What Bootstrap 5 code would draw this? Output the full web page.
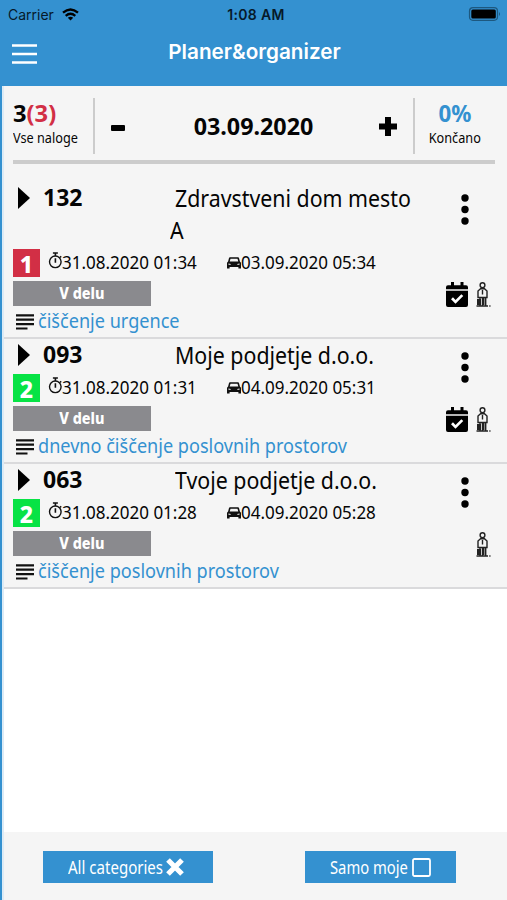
<!DOCTYPE html>
<html lang="sl">
<head>
<meta charset="utf-8">
<meta name="viewport" content="width=device-width, initial-scale=1">
<title>Planer&amp;organizer</title>
<link href="https://cdn.jsdelivr.net/npm/bootstrap@5.3.0/dist/css/bootstrap.min.css" rel="stylesheet">
<style>
:root{--brand:#3491d0;--panel:#f5f5f5}
body{font-family:"Noto Sans","Open Sans",sans-serif;color:#050505;background:#fff;overflow:hidden}
.app{height:900px}
.topbar{height:86px;background:var(--brand);font-family:Inter,"Liberation Sans",sans-serif}
.status{height:27px;font-size:14px;color:#06192a;display:grid;grid-template-columns:1fr auto 1fr;padding:1px 6px 0 8px}
.status b{font-weight:600;font-size:14px;padding-left:3px;letter-spacing:.3px}
.titlebar{height:50px;display:grid;grid-template-columns:1fr auto 1fr;padding:3px 12px 0;color:#fff}
.titlebar h1{font-size:20.7px;font-weight:600;margin:0 0 3px 2px}
.main-area{border-left:2px solid var(--brand);box-shadow:inset 2px 0 0 #dcebf6}
.tight{display:inline-block;white-space:nowrap;transform-origin:0 50%}
.mid{transform-origin:50% 50%}
.panel{background:var(--panel);margin-left:2px}
.summary{height:74px;margin:0 12px 0 9px;padding-top:12px}
.summary .cell{height:56px}
.side{width:80px}
.rule-y{width:2px;height:56px;background:#ccc}
.rule-x{height:4px;background:#ccc;margin:0 12px 0 9px}
.big{font-size:23px;font-weight:700;line-height:30px}
.alert-ink{color:#d22f45}
.brand-ink{color:var(--brand)}
.cap{font-size:14.5px;line-height:18px}
.task{height:125px;border-bottom:2px solid #dadadc;padding-left:9px;display:grid;grid-template-columns:minmax(0,1fr) 78px}
.task.tall{height:175px}
.line1{height:35px}
.tall .line1{height:85px;padding-top:18px}
.play{width:0;height:0;flex:none;border-left:12px solid #000;border-top:11px solid transparent;border-bottom:11px solid transparent;margin:5px 0 0 5px}
.num{width:132px;flex:none;margin-left:13px;font-size:23px;font-weight:700;line-height:30px}
.who{font-size:23.5px;line-height:32px}
.who .wrapped{margin-left:-5px}
.line2{height:28px}
.prio{width:27px;height:28px;color:#fff;font-weight:800;font-size:23px;line-height:31px;text-align:center;background:#07e345}
.prio.high{background:#d22f45}
.when{font-size:18px;line-height:26px;height:26px}
.when.start{width:179px;margin-left:8px}
.when svg.clock{margin:3px -1px 0 0}
.state{width:138px;height:25px;margin-top:4px;background:#8a8a8e;color:#fff;font-weight:800;font-size:16.500px;line-height:23px;text-align:center}
.desc{height:29px;color:var(--brand);font-size:19.5px;line-height:29px;padding-left:3px}
.desc svg{margin:3px 4px 0 0}
.dots{width:8px;height:31px;margin:13px 0 0 32px}
.tall .dots{margin-top:30px}
.marks{height:27px;margin:24px 16px 0 0;gap:8px}
.tall .marks{margin-top:57px}
.footer-bar{height:68px;margin-top:auto;background:var(--panel);margin-left:2px;padding-top:1px}
.act,.act:hover{background:var(--brand);color:#fff;border:0}
.act{font-size:17.5px;border-radius:0;height:32px;padding:0;line-height:32px;gap:5px}
.act svg{margin-top:1px}
.act.all{width:170px;margin-left:39px}
.act.mine{width:151px;margin-right:51px}
.s-big{transform:scaleX(1.03)}
.s-cap{transform:scaleX(.875)}
.s-date{font-size:23.3px;font-weight:700;padding-left:3px}
.s-pct{transform:scaleX(.97)}
.s-who{transform:scaleX(.908)}
.s-when{transform:scaleX(.945)}
.s-desc{transform:scaleX(.928)}
.s-state{transform:scaleX(.87)}
.s-btn{transform:scaleX(.86);margin-right:-17px}
.all .s-btn{margin-left:-4px}
.mine .s-btn{transform:scaleX(.845);margin-right:-16px}
</style>
<script src="https://cdn.jsdelivr.net/npm/bootstrap@5.3.0/dist/js/bootstrap.bundle.min.js"></script>
</head>
<body>
<svg width="0" height="0" class="d-none">
<symbol id="watch" viewBox="0 0 15 17"><circle cx="7.3" cy="9.800" r="5.800" fill="none" stroke="#111" stroke-width="1.4"/><path d="M4.900 1h5M7.400 1v3M12 4.300l1.200 1M7.400 6.300v4.400" fill="none" stroke="#111" stroke-width="1.600"/></symbol>
<symbol id="auto" viewBox="0 0 14 12"><path fill="#111" fill-rule="evenodd" d="M3 .3h8q.8 0 1 .8l.9 3.400 1.100 1.200v5.800h-2.600V10H2.600v1.500H0V5.700l1.100-1.200L2 1.100Q2.200.3 3 .3zM3.500 1.800l-.8 2.700h8.600l-.8-2.700zM1.500 6.500v1.300h2.200v-.9zM12.500 6.500l-2.200.4v.9h2.200z"/></symbol>
<symbol id="lines" viewBox="0 0 18 16"><path d="M0 1.300h18M0 5.700h18M0 10.100h18M0 14.500h11.500" stroke="#111" stroke-width="2.200"/></symbol>
<symbol id="kebab" viewBox="0 0 8 31"><circle cx="4" cy="4" r="3.700"/><circle cx="4" cy="15.500" r="3.700"/><circle cx="4" cy="27" r="3.700"/></symbol>
<symbol id="cal" viewBox="0 0 22 25"><path d="M5 0h3v3.300h6.500V0h3v3.300H20q2 0 2 2v2H0v-2q0-2 2-2h3zM0 8.800h22V23q0 2-2 2H2q-2 0-2-2z"/><path d="M6 16.300l3.500 3.600 6.800-6.800" fill="none" stroke="#fff" stroke-width="2.700"/></symbol>
<symbol id="person" viewBox="0 0 15 25"><g fill="none" stroke="#222" stroke-width="1.400"><circle cx="6.500" cy="3.200" r="2.400"/><path d="M4.500 6.700L2 9v6.500h9V9L8.500 6.700zM6.500 8v4.500M4 15.500v8M6.500 15.500v8M9.700 15.500v8M.5 24h11.500M13.300 24h1.200"/></g><path d="M1 17h4v6H1zM7 16h1.500v7H7z" fill="#222"/></symbol>
</svg>
<div class="app d-flex flex-column">
<header class="topbar">
 <div class="status align-items-center">
  <div class="d-flex align-items-center gap-2"><span>Carrier</span>
   <svg width="17" height="13" viewBox="0 0 17 13"><g fill="none" stroke="#000" stroke-width="2.300"><path d="M1 4.700q7.500-6.400 15 0M3.700 7.800q4.800-4 9.600 0"/></g><path d="M5.800 9.700q2.700-2 5.400 0L8.500 12.600z"/></svg></div>
  <b>1:08 AM</b>
  <svg class="ms-auto" width="33" height="14" viewBox="0 0 33 14"><rect x="1.500" y=".7" width="28" height="12.600" rx="3.500" fill="none" stroke="#1d587f" stroke-width="1.200"/><rect x="3.300" y="2.500" width="24.500" height="9" rx="1.500"/><path d="M31 5q2 2 0 4z" fill="#1d587f"/></svg>
 </div>
 <div class="titlebar align-items-center">
  <svg width="25" height="20" viewBox="0 0 25 20"><path d="M0 1.500h25M0 10h25M0 18.500h25" stroke="#fff" stroke-width="2.500"/></svg>
  <h1>Planer&amp;organizer</h1>
 </div>
</header>
<main class="main-area flex-grow-1 d-flex flex-column">
 <section class="panel">
  <div class="summary d-flex">
   <div class="cell side"><div class="big"><span class="tight s-big">3<span class="alert-ink">(3)</span></span></div><div class="cap"><span class="tight s-cap">Vse naloge</span></div></div>
   <div class="rule-y"></div>
   <div class="cell flex-grow-1 d-flex align-items-center justify-content-between ps-3 pe-3">
    <svg width="14" height="6" class="mt-1"><rect width="14" height="6" rx="1"/></svg>
    <span class="tight mid s-date">03.09.2020</span>
    <svg width="18" height="19" viewBox="0 0 18 19"><path d="M6 0h6v6.500h6v6h-6V19H6v-6.500H0v-6h6z"/></svg>
   </div>
   <div class="rule-y"></div>
   <div class="cell side text-center"><div class="big brand-ink"><span class="tight mid s-pct">0%</span></div><div class="cap"><span class="tight mid s-cap">Končano</span></div></div>
  </div>
  <div class="rule-x"></div>
  <div id="tasks"></div>
 </section>
 <footer class="footer-bar d-flex justify-content-between align-items-center">
  <button class="btn act all d-flex align-items-center justify-content-center"><span class="tight s-btn">All categories</span><svg width="18" height="18" viewBox="0 0 18 18"><path d="M2 2l14 14M16 2L2 16" stroke="#fff" stroke-width="5.200"/></svg></button>
  <button class="btn act mine d-flex align-items-center justify-content-center"><span class="tight s-btn">Samo moje</span><svg width="19" height="19" viewBox="0 0 19 19"><rect x="1" y="1" width="17" height="17" rx="1.500" fill="none" stroke="#fff" stroke-width="1.800"/></svg></button>
 </footer>
</main>
</div>
<script>
const tasks=[
 {num:"132",who:["Zdravstveni dom mesto","A"],prio:1,start:"31.08.2020 01:34",drive:"03.09.2020 05:34",desc:"čiščenje urgence",cal:true},
 {num:"093",who:["Moje podjetje d.o.o."],prio:2,start:"31.08.2020 01:31",drive:"04.09.2020 05:31",desc:"dnevno čiščenje poslovnih prostorov",cal:true},
 {num:"063",who:["Tvoje podjetje d.o.o."],prio:2,start:"31.08.2020 01:28",drive:"04.09.2020 05:28",desc:"čiščenje poslovnih prostorov",cal:false}
];
const icon=(id,w,h,c="")=>`<svg class="flex-shrink-0 ${c}" width="${w}" height="${h}"><use href="#${id}"/></svg>`;
document.getElementById("tasks").innerHTML=tasks.map(t=>`
<article class="task ${t.who.length>1?"tall":""}">
 <div>
  <div class="line1 d-flex"><div class="play"></div><div class="num">${t.num}</div>
   <div class="who">${t.who.map((w,i)=>`<div class="${i?"wrapped":""}"><span class="tight s-who">${w}</span></div>`).join("")}</div></div>
  <div class="line2 d-flex"><div class="prio ${t.prio==1?"high":""}">${t.prio}</div>
   <div class="when start d-flex">${icon("watch",15,17,"clock")}<span class="tight s-when">${t.start}</span></div>
   <div class="when d-flex">${icon("auto",14,12,"mt-2")}<span class="tight s-when">${t.drive}</span></div></div>
  <div class="state"><span class="tight mid s-state">V delu</span></div>
  <div class="desc d-flex align-items-center">${icon("lines",18,16)}<span class="tight s-desc">${t.desc}</span></div>
 </div>
 <div>${icon("kebab",8,31,"dots d-block")}
  <div class="marks d-flex justify-content-end">${t.cal?icon("cal",22,25):""}${icon("person",15,25)}</div></div>
</article>`).join("");
</script>
</body>
</html>
